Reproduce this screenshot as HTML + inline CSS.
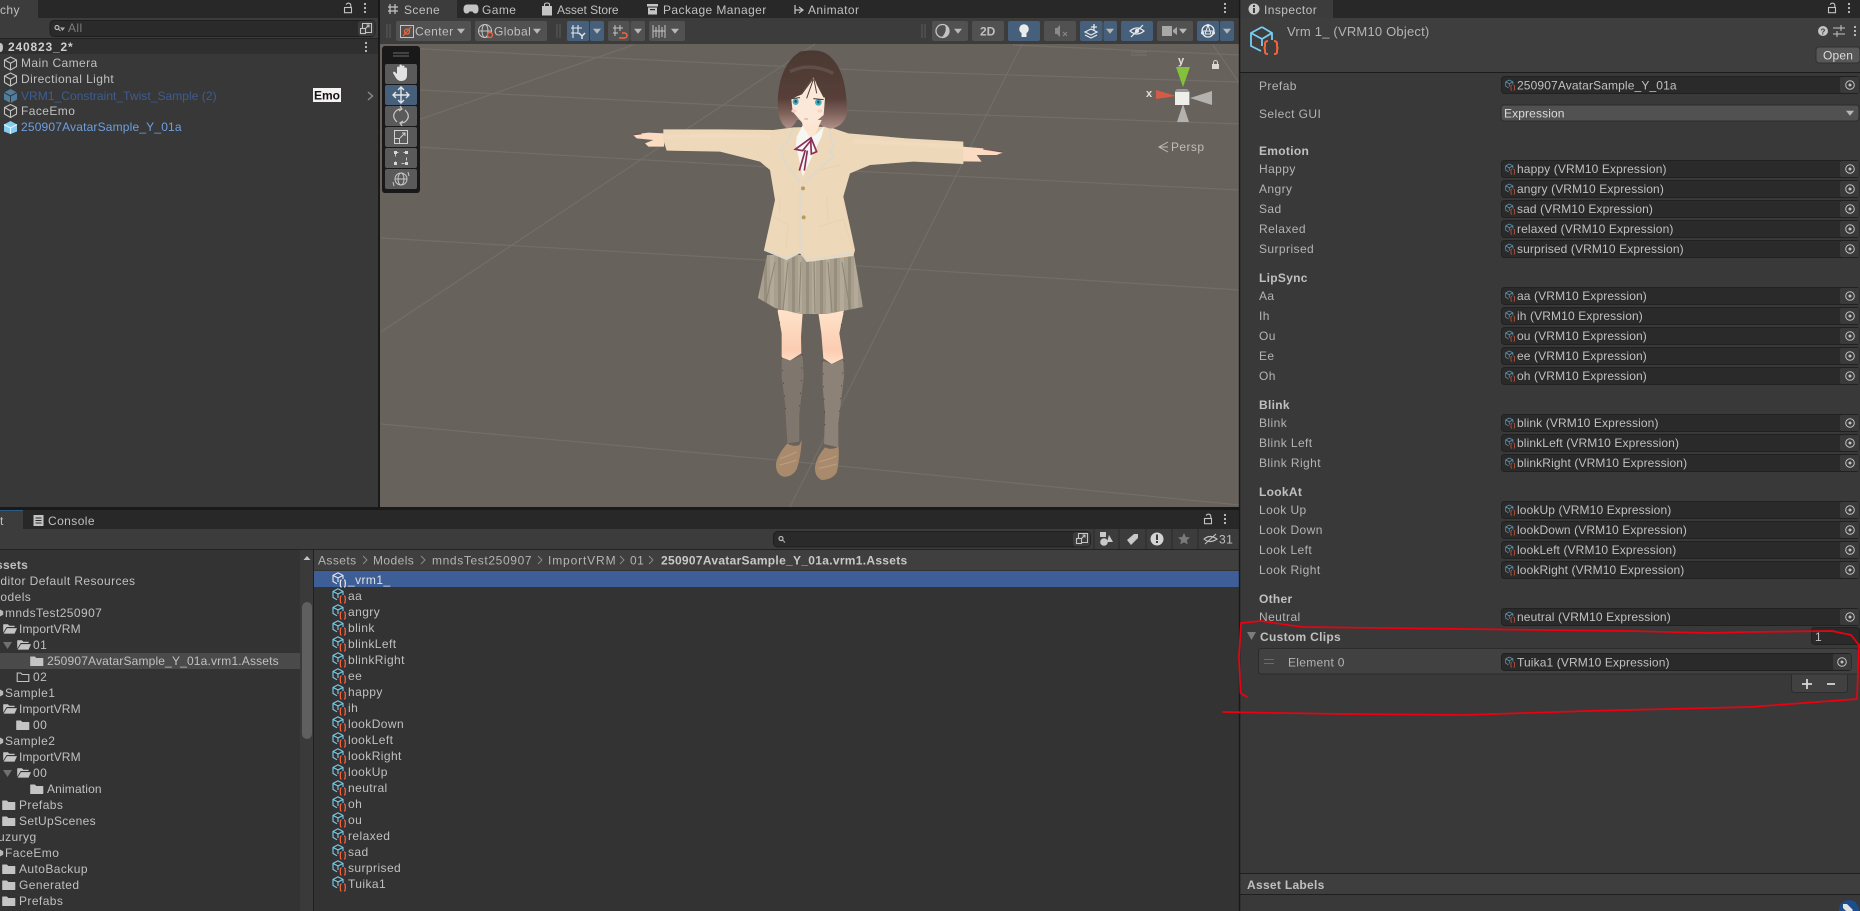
<!DOCTYPE html>
<html><head><meta charset="utf-8"><title>Unity</title>
<style>
html,body{margin:0;padding:0;background:#191919;width:1860px;height:911px;overflow:hidden}
svg{display:block;position:absolute;left:0;top:0}
text{font-family:"Liberation Sans",sans-serif;font-size:12px;fill:#c0c0c0;letter-spacing:.42px;white-space:pre}
.b{font-weight:bold;letter-spacing:.3px}
.d{fill:#b4b4b4}
.e{letter-spacing:.12px}
.s{fill:#7c7c7c;font-size:11px}
</style></head><body>
<svg width="1860" height="911" viewBox="0 0 1860 911" xmlns="http://www.w3.org/2000/svg">
<defs>
<linearGradient id="hg" gradientUnits="userSpaceOnUse" x1="0" y1="35" x2="0" y2="268"><stop offset="0" stop-color="#4a3932"/><stop offset=".6" stop-color="#573f38"/><stop offset=".78" stop-color="#7b6058"/><stop offset="1" stop-color="#b3928a"/></linearGradient>
<linearGradient id="leg" x1="0" y1="0" x2="0" y2="1"><stop offset="0" stop-color="#fee3ca"/><stop offset=".75" stop-color="#fccdb2"/><stop offset="1" stop-color="#fee0c8"/></linearGradient>
<pattern id="pl" width="14" height="30" patternUnits="userSpaceOnUse"><rect width="14" height="30" fill="#a89f8e"/><rect x="0" width="4" height="30" fill="#b3aa98"/><rect x="8" width="3" height="30" fill="#978e7e"/></pattern>
<path id="t" d="M-4-2.2h8l-4 5z" fill="#b8b8b8"/>
<g id="c" fill="none" stroke="#c2c2c2" stroke-width="1.1"><path d="M0-6.5 6-3.5V3L0 6.5-6 3V-3.5ZM-6-3.5 0-.3 6-3.5M0-.3V6.5"/></g>
<g id="v" fill="none" stroke-width="1.1"><path stroke="var(--a,#78cdf0)" d="M-1-7.2 4-4.6V-1M-1-7.2-6-4.6V1.4L-2 3.8M-6-4.6-1-2 4-4.6M-1-2V2"/><path stroke="var(--o,#f2653a)" stroke-width="1.2" d="M2.6 0Q1.4 0 1.4 1.3V2.6Q1.4 3.4.6 3.4 1.4 3.4 1.4 4.2V5.8Q1.4 7 2.6 7M5 0Q6.2 0 6.2 1.3V2.6Q6.2 3.4 7 3.4 6.2 3.4 6.2 4.2V5.8Q6.2 7 5 7"/></g>
<path id="f" fill="#c4c4c4" d="M-6.3-4.5h4.2l1.4 1.5h6.4q.6 0 .6.6v6.9q0 .5-.6.5H-6.3q-.5 0-.5-.5v-8.4q0-.6.5-.6z"/>
<path id="fo" fill="#c4c4c4" d="M-6.3-4.8h4.2l1.4 1.5h5.3v1.3H-3.4L-6.8 3.6V-4.2q0-.6.5-.6zM-3-.9H7L4.6 4.6H-6.4z"/>
<path id="fh" fill="none" stroke="#c4c4c4" stroke-width="1.1" d="M-5.8-4h3.6l1.4 1.5h6.6v7H-5.8z"/>
<path id="h" fill="#b8b8b8" d="M0-3.5 3.2-1.8V1.8L0 3.5-3-1.800z"/>
<g id="dt" fill="#c4c4c4"><circle cy="-4" r="1.1"/><circle r="1.1"/><circle cy="4" r="1.1"/></g>
<g id="lk" fill="none" stroke="#c4c4c4" stroke-width="1.1"><rect x="-3.5" y="-.5" width="7" height="5.2"/><path d="M2.8-.5V-2.4A2.4 2.4 0 0 0-1.8-3.4"/></g>
<g id="sr" fill="none" stroke="#c4c4c4" stroke-width="1.1"><rect x="-5.5" y="-.5" width="5" height="5"/><path d="M-3.5-.5V-5.5H5.5V3.5H-.5M-.8-.2 3-4M.5-4H3V-1.5"/></g>
<g id="F"><rect x=".5" y="-8.5" width="358" height="17" rx="3" fill="#2a2a2a" stroke="#212121"/><rect x="339" y="-8" width="19.5" height="16" rx="2" fill="#3a3a3a"/><circle cx="349" r="4.3" fill="none" stroke="#c2c2c2" stroke-width="1"/><circle cx="349" r="1.5" fill="#c2c2c2"/><use href="#v" transform="translate(9 .2) scale(.72)" style="--a:#5f93ad;--o:#b9553a"/></g>
<path id="hd" fill="none" stroke="#5b5b5b" d="M0-7V7M3-7V7"/>
</defs>

<!-- hierarchy -->
<rect x="0" y="0" width="378" height="18" fill="#282828"/>
<rect x="0" y="0" width="38" height="18" fill="#3c3c3c"/>
<text x="0" y="14">chy</text>
<use href="#lk" x="348" y="8"/><use href="#dt" x="365" y="8"/>
<rect x="0" y="18" width="378" height="21" fill="#3c3c3c"/>
<rect x="50" y="20.500" width="325" height="16" rx="4" fill="#2a2a2a" stroke="#1f1f1f"/>
<rect x="358" y="21" width="16.500" height="15" rx="3" fill="#3c3c3c"/>
<circle cx="57" cy="27.500" r="2" fill="none" stroke="#b8b8b8" stroke-width="1.200"/><path d="M58.500 29l2 2M61 28h3l-1.500 2z" stroke="#b8b8b8" fill="none"/>
<text x="68" y="32" class="s" style="font-size:12px">All</text>
<use href="#sr" x="366" y="29"/>
<rect x="0" y="38" width="378" height="469" fill="#383838"/>
<rect x="0" y="38" width="378" height="1" fill="#232323"/>
<rect x="0" y="39" width="378" height="15" fill="#2f2f2f"/>
<path d="M-3 43h3q3 0 3 4.500t-3 4.500h-3z" fill="#c4c4c4"/>
<text x="8" y="51" class="b" style="fill:#cfcfcf" textLength="65">240823_2*</text>
<use href="#dt" x="366" y="47"/>
<use href="#c" x="10.500" y="63.500"/><text x="21" y="67">Main Camera</text>
<use href="#c" x="10.500" y="79.500"/><text x="21" y="83">Directional Light</text>
<path d="M10.500 89 17 92.500V99.500L10.500 103 4 99.500V92.500Z" fill="#4f7e9e"/><path d="M4 92.500 10.500 96 17 92.500M10.500 96V103" fill="none" stroke="#383838"/><text x="21" y="100" style="fill:#3d5d93" textLength="196">VRM1_Constraint_Twist_Sample (2)</text>
<use href="#c" x="10.500" y="111"/><text x="21" y="115">FaceEmo</text>
<path d="M10.500 121 17 124.500V131.500L10.500 134 4 131.500V124.500Z" fill="#86cdf2"/><path d="M4 124.500 10.500 128 17 124.500M10.500 128V134" fill="none" stroke="#e7f4fb"/><text x="21" y="131" style="fill:#6e9fe0" textLength="161">250907AvatarSample_Y_01a</text>
<rect x="313" y="88" width="28" height="14" fill="#f6f2f2"/><text x="314" y="99.500" class="b" style="fill:#111;letter-spacing:0">Emo</text>
<path d="M368 92l4.500 4-4.500 4" fill="none" stroke="#8a8a8a" stroke-width="1.400"/>

<!-- scene tabs + toolbar -->
<rect x="380" y="0" width="860" height="18" fill="#282828"/>
<rect x="380" y="0" width="77" height="18" fill="#3c3c3c"/>
<path d="M390 4v10M395 4v10M388 7h10M388 11h10" stroke="#c4c4c4" stroke-width="1.200" fill="none"/>
<text x="404" y="14">Scene</text>
<path d="M468 5h8q3 0 3 4.500t-3 4.500q-2 0-3-2h-3q-1 2-3 2-3 0-3-4.500t4-4.500z" fill="#c4c4c4" transform="translate(-.5 -.5)"/>
<text x="482" y="14">Game</text>
<path d="M542 6h10v9.500h-10z" fill="#c4c4c4"/><path d="M544.500 7V4.500q0-1.500 2.500-1.500t2.500 1.500V7" fill="none" stroke="#c4c4c4" stroke-width="1.100"/>
<text x="557" y="14" textLength="62">Asset Store</text>
<path d="M647 4h11v2.500h-11zM648 7.500h9v7h-9z" fill="#c4c4c4"/><rect x="650" y="9" width="5" height="1.200" fill="#282828"/>
<text x="663" y="14">Package Manager</text>
<path d="M795 5v9M795 10h3l4 0M799 7l4 3-4 3" fill="none" stroke="#c4c4c4" stroke-width="1.200"/>
<text x="808" y="14">Animator</text>
<use href="#dt" x="1225" y="8"/>
<rect x="380" y="18" width="860" height="26" fill="#3c3c3c"/>
<use href="#hd" x="387" y="31"/><use href="#hd" x="557" y="31"/><use href="#hd" x="922" y="31"/>
<g fill="#515151">
<rect x="396" y="21" width="75" height="20" rx="2"/><rect x="475" y="21" width="72" height="20" rx="2"/>
<rect x="608" y="21" width="21.500" height="20" rx="2"/><rect x="630.500" y="21" width="14.500" height="20" rx="2"/>
<rect x="649" y="21" width="36" height="20" rx="2"/>
<rect x="932" y="21" width="36" height="20" rx="2"/><rect x="972" y="21" width="32" height="20" rx="2"/>
<rect x="1044" y="21" width="32" height="20" rx="2"/><rect x="1157" y="21" width="36" height="20" rx="2"/>
</g>
<g fill="#46607c">
<rect x="567" y="21" width="22" height="20" rx="2"/><rect x="590" y="21" width="14" height="20" rx="2"/>
<rect x="1008" y="21" width="32" height="20" rx="2"/>
<rect x="1080" y="21" width="22.500" height="20" rx="2"/><rect x="1103.500" y="21" width="13.500" height="20" rx="2"/>
<rect x="1121" y="21" width="32" height="20" rx="2"/>
<rect x="1197" y="21" width="22" height="20" rx="2"/><rect x="1220" y="21" width="14" height="20" rx="2"/>
</g>
<rect x="400.500" y="25.500" width="13" height="12" fill="none" stroke="#c4c4c4"/><circle cx="407" cy="31.500" r="2.500" fill="none" stroke="#f2653a" stroke-width="1.300"/><path d="M403 36l8-9" stroke="#f2653a"/>
<text x="415" y="35.500">Center</text><use href="#t" x="461" y="31"/>
<circle cx="485" cy="31" r="6.500" fill="none" stroke="#c4c4c4"/><ellipse cx="485" cy="31" rx="3" ry="6.500" fill="none" stroke="#c4c4c4"/><path d="M479 31h13" stroke="#c4c4c4"/><circle cx="490" cy="35" r="2.500" fill="#515151" stroke="#f2653a" stroke-width="1.300"/>
<text x="494" y="35.500">Global</text><use href="#t" x="537" y="31"/>
<path d="M573 25v13M578 25v9M571 28h11M571 33h7" stroke="#e4e4e4" stroke-width="1.100" fill="none"/><path d="M579 33l3 3 3-3M582 36v3" stroke="#e4e4e4" stroke-width="1.500" fill="none"/><use href="#t" x="597" y="31"/>
<path d="M615 25v11M620 25v6M613 28h10M613 33h5" stroke="#c4c4c4" fill="none"/><path d="M622 33h2.500a2.500 2.500 0 0 1 0 5H619" stroke="#f2653a" stroke-width="1.500" fill="none"/><use href="#t" x="638" y="31"/>
<path d="M653 25v13M656 27v10M659 25v13M662 27v10M665 25v13M653 31h12" stroke="#c4c4c4" fill="none"/><use href="#t" x="675" y="31"/>
<circle cx="942.500" cy="31" r="6.500" fill="none" stroke="#c4c4c4" stroke-width="1.300"/><path d="M945 25q2.500 6-3 12 7 0 7-6t-4-6z" fill="#c4c4c4"/><use href="#t" x="958" y="31"/>
<text x="980" y="35.500" class="b" style="letter-spacing:0">2D</text>
<circle cx="1024" cy="29" r="4.800" fill="#eaeaea"/><rect x="1021.500" y="33" width="5" height="4" fill="#eaeaea"/>
<path d="M1055 28h2l3-3v12l-3-3h-2z" fill="#8a8a8a"/><path d="M1063 32l4 4M1067 32l-4 4" stroke="#8a8a8a"/>
<path d="M1085 32l6-3 6 3-6 3zM1085 35l6 3 6-3" fill="none" stroke="#eaeaea" stroke-width="1.200"/><path d="M1094 24v6M1091 27h6" stroke="#eaeaea" stroke-width="1.300"/><use href="#t" x="1110" y="31"/>
<path d="M1130 31q7-6 14 0-7 6-14 0z" fill="none" stroke="#eaeaea" stroke-width="1.200"/><circle cx="1137" cy="31" r="2" fill="#eaeaea"/><path d="M1131 37l12-12" stroke="#eaeaea" stroke-width="1.200"/>
<path d="M1162 26h10v10h-10zM1173 30l4-3v8l-4-3z" fill="#a8a8a8"/><use href="#t" x="1183" y="31"/>
<circle cx="1208" cy="31" r="6" fill="none" stroke="#eaeaea" stroke-width="1.300"/><path d="M1202 31h12M1208 25l-3 9h6z" fill="none" stroke="#eaeaea"/><circle cx="1208" cy="25.500" r="1.500" fill="#eaeaea"/><circle cx="1202.500" cy="33" r="1.500" fill="#eaeaea"/><circle cx="1213.500" cy="33" r="1.500" fill="#eaeaea"/><use href="#t" x="1227" y="31"/>

<!-- scene view -->
<rect x="380" y="44" width="860" height="463" fill="#68625c"/>
<g stroke="#736e68" stroke-width="1.200" fill="none">
<path d="M381 47 880 71 1240 82M1013 45 1240 55M381 88 780 108 1240 124M381 145 770 167 1240 190M381 238 763 260 1240 290M381 424 777 460 1240 505"/>
<path d="M381 133 633 45M381 332 815 44M1022 44 790 507M1213 45 1240 84"/>
</g>
<!-- legs + skirt (behind jacket) -->
<g transform="translate(700 270) scale(.33333)">
<path fill="url(#leg)" d="M232 118 308 128 303 200 304 250 270 272 245 262 245 190ZM355 128 432 122 418 190 430 265 395 282 370 265 364 190Z"/>
<path fill="#7f766e" d="M245 262 270 272 308 254 311 320 298 430 298 515 262 520 255 400 245 320Z"/>
<path fill="#8c8277" d="M368 272 395 282 430 268 432 320 415 460 415 532 372 522 375 430 368 350Z"/>
<path fill="#a98a6c" d="M305 510Q303 560 290 598 275 622 250 620 226 612 228 580 232 555 262 520 280 532 298 525Z"/>
<path fill="#a98a6c" d="M416 530Q418 580 410 608 395 630 365 630 343 620 345 590 350 560 375 532 395 542 416 530Z"/>
<path fill="none" stroke="#bda080" stroke-width="3" d="M240 565Q262 560 290 545M238 585Q262 580 290 570M358 575Q382 570 410 558M356 595Q382 590 410 582"/>
<path fill="none" stroke="#4a1c24" stroke-width="1.500" stroke-dasharray="4 34" d="M245 262 257 420M308 254 298 430M368 272 375 470M432 270 415 460M232 118 245 190M432 125 418 190"/>
</g>
<path fill="url(#pl)" d="M767 255 854 255 863 307 827 314 800 314 775 308 758 298Z"/>
<path fill="none" stroke="#8d8575" stroke-width="1" d="M775 262 766 302M788 262 783 310M801 262 799 312M814 262 815 313M828 262 832 312M842 262 850 309"/>
<!-- character upper -->
<g transform="translate(620 40) scale(.33333)">
<path fill="#fbdcc2" d="M132 280 85 278 38 284 50 295 100 300 75 310 85 320 132 320ZM1028 320 1090 325 1150 337 1130 345 1070 345 1085 365 1028 364Z"/>
<path fill="#4a1c24" d="M38 283l25-3 2 3-25 3zM1090 325l60 11-3 2-57-9z" opacity=".7"/>
<path fill="#eed8ba" d="M130 268 300 268 460 270 520 262 625 260 640 265 685 280 860 295 1030 305 1030 372 880 365 750 375 690 400 670 470 690 560 705 630 700 648 560 666 540 640 500 660 432 630 465 480 450 390 420 365 300 335 140 332 130 300Z"/>
<path fill="#f0dbbf" d="M134 285Q300 277 450 285L450 297Q300 288 134 298ZM700 297Q860 306 1028 314V328Q860 316 700 310Z"/>
<path fill="#f6f6f2" d="M550 252 530 290 528 315 548 410 575 352 605 290 612 260 585 285Z"/>
<path fill="none" stroke="#d9d9d3" stroke-width="4" d="M520 265 496 316 482 325 490 360 540 425M626 262 640 322 628 334 640 350 548 432M540 440 540 620 558 660 702 640M432 630 500 658 536 640"/>
<path fill="none" stroke="#e4cfae" stroke-width="2" d="M460 530 505 555 498 625M595 560 670 538 700 630M480 470 478 520M620 470 625 540M600 390 660 375"/>
<circle cx="549" cy="445" r="6" fill="#b89b62"/><circle cx="551" cy="532" r="6" fill="#b89b62"/>
<path fill="url(#hg)" d="M540 35C575 28 605 30 625 45 662 75 678 125 681 205 683 240 660 262 632 266 610 262 595 250 580 240L530 240C525 255 510 268 500 264 478 250 470 210 474 170 478 115 495 65 540 35Z"/>
<path fill="#fde5d2" d="M545 240 605 240 585 285 570 292 548 258Z"/>
<path fill="#fbe8d8" d="M514 178 545 160 580 112 600 150 615 175 611 225 575 255 548 250 518 215Z"/>
<path fill="none" stroke="#54403a" stroke-width="3" d="M580 115 545 162 520 172M580 118 560 175M582 118 590 160M590 130 612 172"/>
<path fill="none" stroke="#fff" stroke-opacity=".1" stroke-width="10" d="M510 95Q570 65 640 100"/>
<ellipse cx="527" cy="185" rx="9" ry="10" fill="#49a9bc"/><ellipse cx="595" cy="187" rx="10" ry="10" fill="#49a9bc"/>
<ellipse cx="527" cy="184" rx="3.500" ry="4.500" fill="#235365"/><ellipse cx="595" cy="186" rx="3.500" ry="4.500" fill="#235365"/>
<path d="M514 176 540 173M580 176 611 179" stroke="#4b3630" stroke-width="3"/>
<ellipse cx="522" cy="213" rx="8" ry="5" fill="#f9d0c4"/><ellipse cx="600" cy="213" rx="8" ry="5" fill="#f9d0c4"/>
<path d="M553 237h11" stroke="#e39a94" stroke-width="3"/>
<path fill="none" stroke="#8a2e58" stroke-width="5" d="M575 292 526 328 548 332 575 298 590 335 574 342 572 298M556 330 538 392M562 332 553 392"/>
</g>
<!-- overlay toolbar -->
<rect x="382" y="46" width="38" height="147" rx="3" fill="#191919"/>
<path d="M393 53h16M393 56h16" stroke="#6a6a6a"/>
<g fill="#5a5a5a"><rect x="385" y="64" width="32" height="20" rx="2"/><rect x="385" y="106" width="32" height="20" rx="2"/><rect x="385" y="127" width="32" height="20" rx="2"/><rect x="385" y="148" width="32" height="20" rx="2"/><rect x="385" y="169" width="32" height="20" rx="2"/></g>
<rect x="385" y="85" width="32" height="20" rx="2" fill="#46607c"/>
<path d="M397 74V68q0-1.500 1.200-1.500t1.200 1.500v-2q0-1.500 1.300-1.500t1.300 1.500v1q0-1.500 1.300-1.500t1.300 1.500v2q0-1.500 1.200-1.500t1.200 1.500v6q0 6-6 6-3 0-5-3l-3-5q0-2 2-1z" fill="#e2e2e2"/>
<path d="M401 87v16M393 95h16M398 90l3-3 3 3M398 100l3 3 3-3M396 92l-3 3 3 3M406 92l3 3-3 3" fill="none" stroke="#e4e4e4" stroke-width="1.400"/>
<path d="M397 122q-6-6-1-11 2-2 5-2M405 110q6 6 1 11-2 2-5 2M400 106l2 3-3 2M402 126l-2-3 3-2" fill="none" stroke="#c8c8c8" stroke-width="1.200"/>
<rect x="394.500" y="130.500" width="13" height="13" fill="none" stroke="#d0d0d0"/><rect x="394.500" y="138.500" width="5" height="5" fill="none" stroke="#d0d0d0"/><path d="M400 138l5-5M402 133h3v3" fill="none" stroke="#d0d0d0"/>
<rect x="395.500" y="152.500" width="11" height="11" fill="none" stroke="#c8c8c8" stroke-dasharray="3 5"/><g fill="#d8d8d8"><rect x="394" y="151" width="3" height="3"/><rect x="405" y="151" width="3" height="3"/><rect x="394" y="162" width="3" height="3"/><rect x="405" y="162" width="3" height="3"/></g>
<circle cx="401" cy="179" r="6" fill="none" stroke="#c8c8c8"/><ellipse cx="401" cy="179" rx="3" ry="6" fill="none" stroke="#c8c8c8"/><path d="M395 179h12M394 186l-1-4M408 172l1 4" stroke="#c8c8c8"/>
<!-- gizmo -->
<path d="M1131 52h16M1131 55h16" stroke="#77726c"/>
<path d="M1176 67h14l-7 20z" fill="#83c13c"/>
<path d="M1156 90v9l20-3z" fill="#d65a48"/>
<path d="M1212 91v14l-22-7z" fill="#b4b2ae"/>
<path d="M1183 104l-6 18h12z" fill="#b4b2ae"/>
<path d="M1177 89h10l3 3v13h-15v-14z" fill="#9a9894"/>
<rect x="1175" y="92" width="14" height="13" fill="#eeeeea"/>
<text x="1178" y="64" class="b" style="font-size:11px;fill:#e0e0e0;letter-spacing:0">y</text>
<text x="1146" y="97" class="b" style="font-size:11px;fill:#e0e0e0;letter-spacing:0">x</text>
<rect x="1212" y="64" width="7" height="5" fill="#d8d8d4"/><path d="M1213.500 64v-1.500a2 2 0 0 1 4 0V64" stroke="#d8d8d4" fill="none"/>
<path d="M1168 142l-9 5 9 5M1159 147h9" fill="none" stroke="#c0bdb8"/>
<text x="1171" y="151" style="fill:#c0bdb8">Persp</text>

<!-- bottom panel -->
<rect x="0" y="510" width="1240" height="19" fill="#282828"/>
<rect x="0" y="510" width="23" height="19" fill="#3c3c3c"/><rect x="0" y="510" width="23" height="1" fill="#2c5d87"/>
<text x="0" y="525">t</text>
<path d="M33.500 515h10v11h-10z" fill="#c4c4c4"/><path d="M35.500 518h6M35.500 520.500h6M35.500 523h6" stroke="#282828"/>
<text x="48" y="525">Console</text>
<use href="#lk" x="1208" y="519"/><use href="#dt" x="1225" y="519"/>
<rect x="0" y="529" width="1240" height="20" fill="#3c3c3c"/>
<rect x="0" y="549" width="1240" height="1" fill="#232323"/>
<rect x="773.500" y="531.500" width="317" height="15.500" rx="4" fill="#2a2a2a" stroke="#1f1f1f"/>
<rect x="1073" y="532" width="17" height="14.500" rx="3" fill="#3c3c3c"/>
<circle cx="781" cy="538.500" r="2" fill="none" stroke="#b8b8b8" stroke-width="1.200"/><path d="M782.500 540l2.500 2.500" stroke="#b8b8b8"/>
<use href="#sr" x="1082" y="539"/>
<path d="M1094 529v20M1119 529v20M1146 529v20M1172 529v20M1198 529v20" stroke="#2a2a2a"/>
<rect x="1100" y="532" width="6" height="5" fill="#c8c8c8"/><circle cx="1104" cy="542" r="3.800" fill="#c8c8c8"/><path d="M1109 535l4 7h-6z" fill="#c8c8c8"/>
<path d="M1127 540l7-6h4v4l-7 7z" fill="#c8c8c8"/>
<circle cx="1157" cy="539" r="6.500" fill="#d4d4d4"/><rect x="1156" y="534.500" width="2" height="5.500" fill="#3c3c3c"/><rect x="1156" y="541" width="2" height="2" fill="#3c3c3c"/>
<path d="M1184 533l1.800 4 4.200.4-3.200 2.800 1 4.200-3.800-2.200-3.800 2.200 1-4.200-3.200-2.800 4.200-.4z" fill="#7a7a7a"/>
<path d="M1204 539q6-5 13 0-7 5-13 0zM1205 544l11-10" fill="none" stroke="#c0c0c0" stroke-width="1.100"/>
<text x="1219" y="543.500">31</text>
<!-- tree -->
<rect x="0" y="550" width="300" height="361" fill="#333333"/>
<rect x="300" y="550" width="13" height="361" fill="#3a3a3a"/>
<path d="M303.500 560h7l-3.500-4z" fill="#c4c4c4"/>
<rect x="302" y="602" width="10" height="137" rx="5" fill="#5f5f5f"/>
<rect x="313" y="550" width="1" height="361" fill="#1f1f1f"/>
<rect x="0" y="653" width="300" height="16" fill="#4a4a4a"/>
<text x="-13" y="569" class="b">Assets</text>
<text x="-8" y="585">Editor Default Resources</text>
<text x="-10" y="601">Models</text>
<use href="#h" x="0" y="613"/><text x="5" y="617">mndsTest250907</text>
<use href="#fo" x="10" y="629"/><text x="19" y="633" textLength="62">ImportVRM</text>
<path d="M3 642h9l-4.500 7z" fill="#707070"/><use href="#fo" x="24" y="645"/><text x="33" y="649">01</text>
<use href="#f" x="37" y="661"/><text x="47" y="665" textLength="232">250907AvatarSample_Y_01a.vrm1.Assets</text>
<use href="#fh" x="23" y="677"/><text x="33" y="681">02</text>
<use href="#h" x="0" y="693"/><text x="5" y="697">Sample1</text>
<use href="#fo" x="10" y="709"/><text x="19" y="713" textLength="62">ImportVRM</text>
<use href="#f" x="23" y="725"/><text x="33" y="729">00</text>
<use href="#h" x="0" y="741"/><text x="5" y="745">Sample2</text>
<use href="#fo" x="10" y="757"/><text x="19" y="761" textLength="62">ImportVRM</text>
<path d="M3 770h9l-4.500 7z" fill="#707070"/><use href="#fo" x="24" y="773"/><text x="33" y="777">00</text>
<use href="#f" x="37" y="789"/><text x="47" y="793" textLength="55">Animation</text>
<use href="#f" x="9" y="805"/><text x="19" y="809">Prefabs</text>
<use href="#f" x="9" y="821"/><text x="19" y="825" textLength="77">SetUpScenes</text>
<text x="-2" y="841">uzuryg</text>
<use href="#h" x="0" y="853"/><text x="5" y="857">FaceEmo</text>
<use href="#f" x="9" y="869"/><text x="19" y="873">AutoBackup</text>
<use href="#f" x="9" y="885"/><text x="19" y="889">Generated</text>
<use href="#f" x="9" y="901"/><text x="19" y="905">Prefabs</text>
<!-- right list -->
<rect x="314" y="550" width="926" height="361" fill="#333333"/>
<rect x="314" y="550" width="926" height="20" fill="#3f3f3f"/>
<text x="318" y="564.500" class="d">Assets</text><path d="M363 556l4 4-4 4" fill="none" stroke="#8a8a8a"/>
<text x="373" y="564.500" class="d">Models</text><path d="M421 556l4 4-4 4" fill="none" stroke="#8a8a8a"/>
<text x="432" y="564.500" class="d" textLength="100">mndsTest250907</text><path d="M538 556l4 4-4 4" fill="none" stroke="#8a8a8a"/>
<text x="548" y="564.500" class="d" textLength="68">ImportVRM</text><path d="M620 556l4 4-4 4" fill="none" stroke="#8a8a8a"/>
<text x="630" y="564.500" class="d">01</text><path d="M649 556l4 4-4 4" fill="none" stroke="#8a8a8a"/>
<text x="661" y="564.500" class="b" style="fill:#c8c8c8">250907AvatarSample_Y_01a.vrm1.Assets</text>
<rect x="314" y="571" width="926" height="16" fill="#3d5e96"/>
<use href="#v" x="339" y="580" style="--a:#e8e8e8;--o:#e8e8e8"/><text x="348" y="584" style="fill:#e0e0e0">_vrm1_</text>
<use href="#v" x="339" y="596"/><text x="348" y="600">aa</text>
<use href="#v" x="339" y="612"/><text x="348" y="616">angry</text>
<use href="#v" x="339" y="628"/><text x="348" y="632">blink</text>
<use href="#v" x="339" y="644"/><text x="348" y="648">blinkLeft</text>
<use href="#v" x="339" y="660"/><text x="348" y="664">blinkRight</text>
<use href="#v" x="339" y="676"/><text x="348" y="680">ee</text>
<use href="#v" x="339" y="692"/><text x="348" y="696">happy</text>
<use href="#v" x="339" y="708"/><text x="348" y="712">ih</text>
<use href="#v" x="339" y="724"/><text x="348" y="728">lookDown</text>
<use href="#v" x="339" y="740"/><text x="348" y="744">lookLeft</text>
<use href="#v" x="339" y="756"/><text x="348" y="760">lookRight</text>
<use href="#v" x="339" y="772"/><text x="348" y="776">lookUp</text>
<use href="#v" x="339" y="788"/><text x="348" y="792">neutral</text>
<use href="#v" x="339" y="804"/><text x="348" y="808">oh</text>
<use href="#v" x="339" y="820"/><text x="348" y="824">ou</text>
<use href="#v" x="339" y="836"/><text x="348" y="840">relaxed</text>
<use href="#v" x="339" y="852"/><text x="348" y="856">sad</text>
<use href="#v" x="339" y="868"/><text x="348" y="872">surprised</text>
<use href="#v" x="339" y="884"/><text x="348" y="888">Tuika1</text>

<!-- inspector -->
<rect x="1240" y="0" width="620" height="18" fill="#282828"/>
<rect x="1240" y="0" width="93" height="18" fill="#3c3c3c"/>
<circle cx="1254" cy="9" r="5.500" fill="#c8c8c8"/><rect x="1253" y="8" width="2" height="5" fill="#3c3c3c"/><rect x="1253" y="5" width="2" height="2" fill="#3c3c3c"/>
<text x="1264" y="14">Inspector</text>
<use href="#lk" x="1832" y="8"/><use href="#dt" x="1849" y="8"/>
<rect x="1240" y="18" width="620" height="54" fill="#3e3e3e"/>
<rect x="1240" y="72" width="620" height="1" fill="#1c1c1c"/>
<rect x="1240" y="73" width="620" height="838" fill="#393939"/>
<g fill="none" stroke-width="1.800"><path stroke="#78cdf0" d="M1262 27 1272 33V40M1262 27 1251 33V46L1261 51M1251 33 1262 39 1272 33M1262 39V46"/><path stroke="#f2653a" stroke-width="2" d="M1268 41Q1265 41 1265 44V46Q1265 48 1263.500 48 1265 48 1265 50V52Q1265 54 1268 54M1274 41Q1277 41 1277 44V46Q1277 48 1278.500 48 1277 48 1277 50V52Q1277 54 1274 54"/></g>
<text x="1287" y="36" style="font-size:13px;fill:#b4b4b4;letter-spacing:.2px">Vrm 1_ (VRM10 Object)</text>
<circle cx="1823" cy="31" r="5" fill="#c4c4c4"/><text x="1820.500" y="34.500" class="b" style="font-size:8px;fill:#3e3e3e;letter-spacing:0">?</text>
<path d="M1833 28h12M1833 34h12M1841 25v6M1837 31v6" stroke="#c4c4c4" fill="none"/>
<use href="#dt" x="1855" y="31"/>
<rect x="1816" y="47" width="44" height="16" rx="3" fill="#585858" stroke="#303030"/>
<text x="1823" y="59.500" style="fill:#dcdcdc;letter-spacing:.2px">Open</text>

<text x="1259" y="90" class="d">Prefab</text>
<use href="#F" x="1501" y="85"/><text x="1517" y="89.500" textLength="160">250907AvatarSample_Y_01a</text>
<text x="1259" y="118" class="d">Select GUI</text>
<rect x="1501" y="105" width="358" height="16" rx="3" fill="#515151" stroke="#2c2c2c"/><text x="1504" y="117.500" class="e" style="fill:#dcdcdc">Expression</text><use href="#t" x="1850" y="113"/>

<text x="1259" y="155" class="b">Emotion</text>
<text x="1259" y="173" class="d">Happy</text><use href="#F" x="1501" y="169"/><text x="1517" y="173" class="e">happy (VRM10 Expression)</text>
<text x="1259" y="193" class="d">Angry</text><use href="#F" x="1501" y="189"/><text x="1517" y="193" class="e">angry (VRM10 Expression)</text>
<text x="1259" y="213" class="d">Sad</text><use href="#F" x="1501" y="209"/><text x="1517" y="213" class="e">sad (VRM10 Expression)</text>
<text x="1259" y="233" class="d">Relaxed</text><use href="#F" x="1501" y="229"/><text x="1517" y="233" class="e">relaxed (VRM10 Expression)</text>
<text x="1259" y="253" class="d">Surprised</text><use href="#F" x="1501" y="249"/><text x="1517" y="253" class="e">surprised (VRM10 Expression)</text>

<text x="1259" y="282" class="b">LipSync</text>
<text x="1259" y="300" class="d">Aa</text><use href="#F" x="1501" y="296"/><text x="1517" y="300" class="e">aa (VRM10 Expression)</text>
<text x="1259" y="320" class="d">Ih</text><use href="#F" x="1501" y="316"/><text x="1517" y="320" class="e">ih (VRM10 Expression)</text>
<text x="1259" y="340" class="d">Ou</text><use href="#F" x="1501" y="336"/><text x="1517" y="340" class="e">ou (VRM10 Expression)</text>
<text x="1259" y="360" class="d">Ee</text><use href="#F" x="1501" y="356"/><text x="1517" y="360" class="e">ee (VRM10 Expression)</text>
<text x="1259" y="380" class="d">Oh</text><use href="#F" x="1501" y="376"/><text x="1517" y="380" class="e">oh (VRM10 Expression)</text>

<text x="1259" y="409" class="b">Blink</text>
<text x="1259" y="427" class="d">Blink</text><use href="#F" x="1501" y="423"/><text x="1517" y="427" class="e">blink (VRM10 Expression)</text>
<text x="1259" y="447" class="d">Blink Left</text><use href="#F" x="1501" y="443"/><text x="1517" y="447" class="e">blinkLeft (VRM10 Expression)</text>
<text x="1259" y="467" class="d">Blink Right</text><use href="#F" x="1501" y="463"/><text x="1517" y="467" class="e">blinkRight (VRM10 Expression)</text>

<text x="1259" y="496" class="b">LookAt</text>
<text x="1259" y="514" class="d">Look Up</text><use href="#F" x="1501" y="510"/><text x="1517" y="514" class="e">lookUp (VRM10 Expression)</text>
<text x="1259" y="534" class="d">Look Down</text><use href="#F" x="1501" y="530"/><text x="1517" y="534" class="e">lookDown (VRM10 Expression)</text>
<text x="1259" y="554" class="d">Look Left</text><use href="#F" x="1501" y="550"/><text x="1517" y="554" class="e">lookLeft (VRM10 Expression)</text>
<text x="1259" y="574" class="d">Look Right</text><use href="#F" x="1501" y="570"/><text x="1517" y="574" class="e">lookRight (VRM10 Expression)</text>

<text x="1259" y="603" class="b">Other</text>
<text x="1259" y="621" class="d">Neutral</text><use href="#F" x="1501" y="617"/><text x="1517" y="621" class="e">neutral (VRM10 Expression)</text>

<path d="M1247 632h9l-4.500 8z" fill="#7c7c7c"/>
<text x="1260" y="641" class="b">Custom Clips</text>
<rect x="1811.500" y="627.500" width="48" height="17" rx="3" fill="#2a2a2a" stroke="#212121"/><text x="1815" y="641">1</text>
<rect x="1258.500" y="648.500" width="600" height="25.500" rx="3" fill="#414141" stroke="#2c2c2c"/>
<path d="M1264 659.500h10M1264 663.500h10" stroke="#6a6a6a"/>
<text x="1288" y="666.500" class="d" style="letter-spacing:.3px">Element 0</text>
<rect x="1501.500" y="653.500" width="350" height="17" rx="3" fill="#2a2a2a" stroke="#212121"/>
<rect x="1833" y="654" width="18.500" height="16" rx="2" fill="#3a3a3a"/><circle cx="1842" cy="662" r="4.300" fill="none" stroke="#c2c2c2"/><circle cx="1842" cy="662" r="1.500" fill="#c2c2c2"/>
<use href="#v" transform="translate(1510 662.200) scale(.72)" style="--a:#5f93ad;--o:#b9553a"/>
<text x="1517" y="666.500" class="e">Tuika1 (VRM10 Expression)</text>
<path d="M1791.500 674.500v15q0 3 3 3h50q3 0 3-3v-15" fill="#414141" stroke="#2c2c2c"/>
<path d="M1802 684h10M1807 679v10M1827 684h8" stroke="#d8d8d8" stroke-width="1.800"/>

<rect x="1240" y="873" width="620" height="1" fill="#1f1f1f"/>
<rect x="1240" y="874" width="620" height="20" fill="#3e3e3e"/>
<rect x="1240" y="894" width="620" height="1" fill="#1f1f1f"/>
<text x="1247" y="889" class="b">Asset Labels</text>
<circle cx="1849" cy="910" r="10" fill="#1d4e8c"/>
<path d="M1843 904h4l6 6-4 4-6-6z" fill="#e4e4e4"/>
<rect x="1238.800" y="0" width="1.500" height="911" fill="#191919"/>

<!-- red annotation -->
<path d="M1247 697 1240.500 693 1239 657 1241 623 1261 621 1302 627 1465 629 1628 631 1710 633 1746 632 1832 631 1851 635 1859 645 1857 699 1750 707 1587 711 1465 715 1342 714 1223 712" fill="none" stroke="#ee0010" stroke-width="1.700" stroke-linejoin="round" stroke-linecap="round"/>
</svg>
</body></html>
